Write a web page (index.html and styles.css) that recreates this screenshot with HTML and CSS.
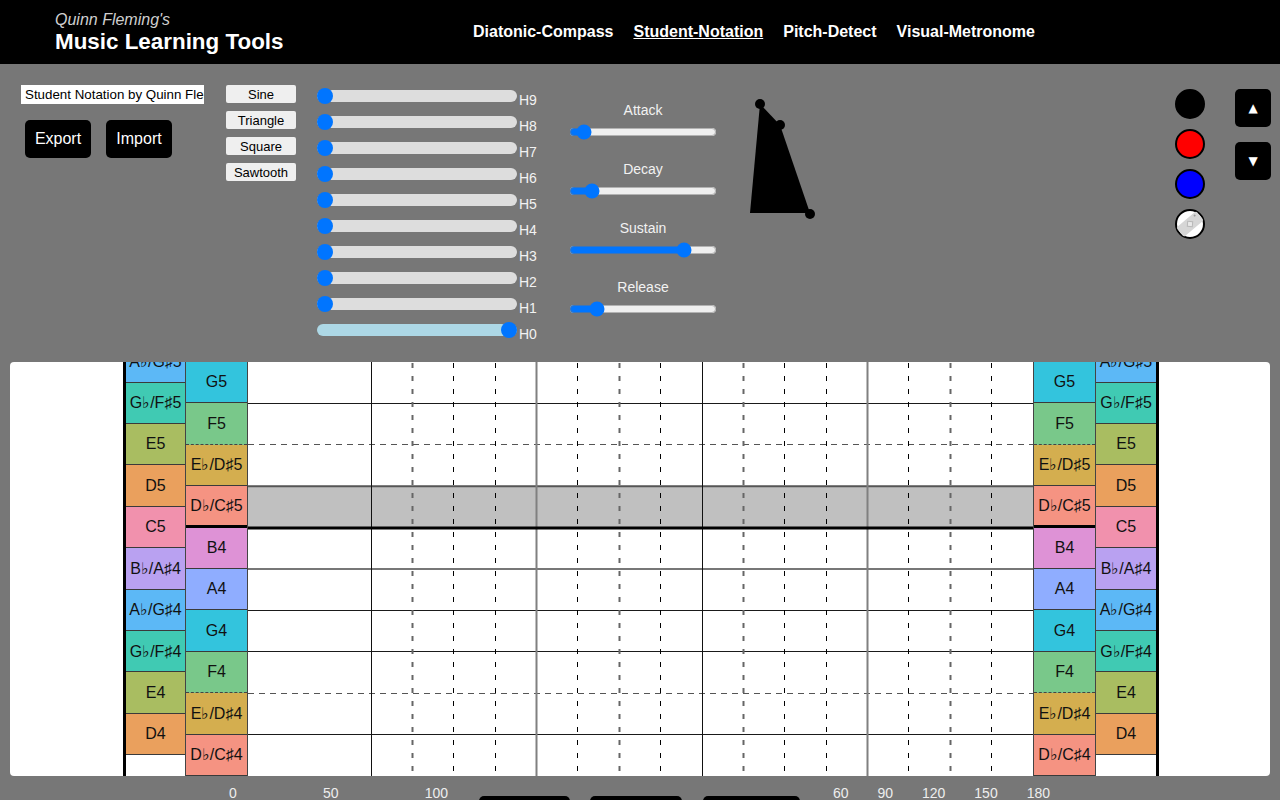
FILE: index.html
```html
<!DOCTYPE html>
<html>
<head>
<meta charset="utf-8">
<title>Student Notation</title>
<link rel="stylesheet" href="styles.css">
</head>
<body>
<header class="topbar">
  <div class="brand">
    <div class="brand-sub">Quinn Fleming's</div>
    <div class="brand-title">Music Learning Tools</div>
  </div>
  <nav class="nav">
    <a class="nav-link">Diatonic-Compass</a>
    <a class="nav-link active">Student-Notation</a>
    <a class="nav-link">Pitch-Detect</a>
    <a class="nav-link">Visual-Metronome</a>
  </nav>
</header>

<section class="controls">
  <div class="file-col">
    <input class="title-input" type="text" value="Student Notation by Quinn Fleming">
    <div class="file-buttons">
      <button class="dark-btn">Export</button>
      <button class="dark-btn">Import</button>
    </div>
  </div>

  <div class="wave-col">
    <button class="wave-btn">Sine</button>
    <button class="wave-btn">Triangle</button>
    <button class="wave-btn">Square</button>
    <button class="wave-btn">Sawtooth</button>
  </div>

  <div class="harm-col">
    <div class="harm-row"><input class="harm" type="range" min="0" max="100" value="0"><span class="harm-label">H9</span></div>
    <div class="harm-row"><input class="harm" type="range" min="0" max="100" value="0"><span class="harm-label">H8</span></div>
    <div class="harm-row"><input class="harm" type="range" min="0" max="100" value="0"><span class="harm-label">H7</span></div>
    <div class="harm-row"><input class="harm" type="range" min="0" max="100" value="0"><span class="harm-label">H6</span></div>
    <div class="harm-row"><input class="harm" type="range" min="0" max="100" value="0"><span class="harm-label">H5</span></div>
    <div class="harm-row"><input class="harm" type="range" min="0" max="100" value="0"><span class="harm-label">H4</span></div>
    <div class="harm-row"><input class="harm" type="range" min="0" max="100" value="0"><span class="harm-label">H3</span></div>
    <div class="harm-row"><input class="harm" type="range" min="0" max="100" value="0"><span class="harm-label">H2</span></div>
    <div class="harm-row"><input class="harm" type="range" min="0" max="100" value="0"><span class="harm-label">H1</span></div>
    <div class="harm-row"><input class="harm harm-base" type="range" min="0" max="100" value="100"><span class="harm-label">H0</span></div>
  </div>

  <div class="adsr-col">
    <div class="adsr-group"><div class="adsr-label">Attack</div><input class="adsr" type="range" min="0" max="100" value="5"></div>
    <div class="adsr-group"><div class="adsr-label">Decay</div><input class="adsr" type="range" min="0" max="100" value="11"></div>
    <div class="adsr-group"><div class="adsr-label">Sustain</div><input class="adsr" type="range" min="0" max="100" value="81"></div>
    <div class="adsr-group"><div class="adsr-label">Release</div><input class="adsr" type="range" min="0" max="100" value="15"></div>
  </div>

  <svg class="envelope" width="72" height="126" viewBox="0 0 72 126">
    <polygon points="5,118 15,9 35,30 65,118" fill="#000"/>
    <circle cx="15" cy="9" r="5" fill="#000"/>
    <circle cx="35" cy="30" r="5" fill="#000"/>
    <circle cx="65" cy="119" r="5" fill="#000"/>
  </svg>

  <div class="right-tools">
    <div class="swatches">
      <span class="swatch swatch-black"></span>
      <span class="swatch swatch-red"></span>
      <span class="swatch swatch-blue"></span>
      <svg class="eraser" width="30" height="30" viewBox="0 0 30 30">
        <circle cx="15" cy="15" r="14" fill="#fff" stroke="#000" stroke-width="2"/>
        <g transform="rotate(-40 15 15)">
          <rect x="2" y="9" width="26" height="12" rx="2" fill="#d6d6d6"/>
          <rect x="12.5" y="12.5" width="5" height="5" fill="#e8e8e8" stroke="#b8b8b8" stroke-width="1" transform="rotate(45 15 15)"/>
          <circle cx="24" cy="11.5" r="1" fill="#9a9a9a"/>
        </g>
      </svg>
    </div>
    <div class="arrows">
      <button class="arrow-btn">▲</button>
      <button class="arrow-btn">▼</button>
    </div>
  </div>
</section>

<main class="panel">
  <div class="ladder">
    <div class="col col-a col-a-left">
      <div class="cell n-ab">A♭/G♯5</div>
      <div class="cell n-gb">G♭/F♯5</div>
      <div class="cell n-e">E5</div>
      <div class="cell n-d">D5</div>
      <div class="cell n-c">C5</div>
      <div class="cell n-bb">B♭/A♯4</div>
      <div class="cell n-ab">A♭/G♯4</div>
      <div class="cell n-gb">G♭/F♯4</div>
      <div class="cell n-e">E4</div>
      <div class="cell n-d">D4</div>
      <div class="cell n-empty"></div>
    </div>
    <div class="col col-b">
      <div class="cell n-g">G5</div>
      <div class="cell n-f dashed">F5</div>
      <div class="cell n-eb">E♭/D♯5</div>
      <div class="cell n-db c-line">D♭/C♯5</div>
      <div class="cell n-b">B4</div>
      <div class="cell n-a">A4</div>
      <div class="cell n-g">G4</div>
      <div class="cell n-f dashed">F4</div>
      <div class="cell n-eb">E♭/D♯4</div>
      <div class="cell n-db">D♭/C♯4</div>
    </div>
  </div>

  <svg class="grid" width="785" height="414" viewBox="0 0 785 414">
    <rect x="0" y="124.2" width="785" height="41.4" fill="#c0c0c0"/>
    <g fill="none">
      <line x1="0" y1="41.5" x2="785" y2="41.5" stroke="#1a1a1a" stroke-width="1"/>
      <line x1="0" y1="82.5" x2="785" y2="82.5" stroke="#555" stroke-width="1" stroke-dasharray="6 5"/>
      <line x1="0" y1="124.2" x2="785" y2="124.2" stroke="#555" stroke-width="2"/>
      <line x1="0" y1="207" x2="785" y2="207" stroke="#777" stroke-width="2"/>
      <line x1="0" y1="248.5" x2="785" y2="248.5" stroke="#1a1a1a" stroke-width="1"/>
      <line x1="0" y1="289.5" x2="785" y2="289.5" stroke="#1a1a1a" stroke-width="1"/>
      <line x1="0" y1="331.5" x2="785" y2="331.5" stroke="#555" stroke-width="1" stroke-dasharray="6 5"/>
      <line x1="0" y1="372.5" x2="785" y2="372.5" stroke="#1a1a1a" stroke-width="1"/>
    </g>
    <g fill="none">
      <line x1="123.5" y1="0" x2="123.5" y2="414" stroke="#111" stroke-width="1"/>
      <line x1="164.5" y1="1" x2="164.5" y2="414" stroke="#666" stroke-width="2" stroke-dasharray="5 8"/>
      <line x1="205.5" y1="1" x2="205.5" y2="414" stroke="#000" stroke-width="1" stroke-dasharray="5 8"/>
      <line x1="247.5" y1="1" x2="247.5" y2="414" stroke="#000" stroke-width="1" stroke-dasharray="5 8"/>
      <line x1="288.5" y1="0" x2="288.5" y2="414" stroke="#808080" stroke-width="2"/>
      <line x1="329.5" y1="1" x2="329.5" y2="414" stroke="#000" stroke-width="1" stroke-dasharray="5 8"/>
      <line x1="371.5" y1="1" x2="371.5" y2="414" stroke="#666" stroke-width="2" stroke-dasharray="5 8"/>
      <line x1="412.5" y1="1" x2="412.5" y2="414" stroke="#000" stroke-width="1" stroke-dasharray="5 8"/>
      <line x1="454.5" y1="0" x2="454.5" y2="414" stroke="#111" stroke-width="1"/>
      <line x1="495.5" y1="1" x2="495.5" y2="414" stroke="#666" stroke-width="2" stroke-dasharray="5 8"/>
      <line x1="536.5" y1="1" x2="536.5" y2="414" stroke="#000" stroke-width="1" stroke-dasharray="5 8"/>
      <line x1="578.5" y1="1" x2="578.5" y2="414" stroke="#000" stroke-width="1" stroke-dasharray="5 8"/>
      <line x1="619.5" y1="0" x2="619.5" y2="414" stroke="#808080" stroke-width="2"/>
      <line x1="660.5" y1="1" x2="660.5" y2="414" stroke="#000" stroke-width="1" stroke-dasharray="5 8"/>
      <line x1="702.5" y1="1" x2="702.5" y2="414" stroke="#666" stroke-width="2" stroke-dasharray="5 8"/>
      <line x1="743.5" y1="1" x2="743.5" y2="414" stroke="#000" stroke-width="1" stroke-dasharray="5 8"/>
    </g>
    <line x1="0" y1="166" x2="785" y2="166" stroke="#000" stroke-width="3"/>
  </svg>

  <div class="ladder">
    <div class="col col-b">
      <div class="cell n-g">G5</div>
      <div class="cell n-f dashed">F5</div>
      <div class="cell n-eb">E♭/D♯5</div>
      <div class="cell n-db c-line">D♭/C♯5</div>
      <div class="cell n-b">B4</div>
      <div class="cell n-a">A4</div>
      <div class="cell n-g">G4</div>
      <div class="cell n-f dashed">F4</div>
      <div class="cell n-eb">E♭/D♯4</div>
      <div class="cell n-db">D♭/C♯4</div>
    </div>
    <div class="col col-a col-a-right">
      <div class="cell n-ab">A♭/G♯5</div>
      <div class="cell n-gb">G♭/F♯5</div>
      <div class="cell n-e">E5</div>
      <div class="cell n-d">D5</div>
      <div class="cell n-c">C5</div>
      <div class="cell n-bb">B♭/A♯4</div>
      <div class="cell n-ab">A♭/G♯4</div>
      <div class="cell n-gb">G♭/F♯4</div>
      <div class="cell n-e">E4</div>
      <div class="cell n-d">D4</div>
      <div class="cell n-empty"></div>
    </div>
  </div>
</main>

<div class="bottom-row">
  <div class="ticks ticks-a"><span>0</span><span>50</span><span>100</span></div>
  <div class="bottom-btn bottom-btn-1"></div>
  <div class="bottom-btn bottom-btn-2"></div>
  <div class="bottom-btn bottom-btn-3"></div>
  <div class="ticks ticks-b"><span>60</span><span>90</span><span>120</span><span>150</span><span>180</span></div>
</div>
</body>
</html>
```

FILE: styles.css
```css
html, body {
  margin: 0;
  padding: 0;
  height: 800px;
  overflow: hidden;
}

body {
  background: #777777;
  font-family: "Liberation Sans", Arial, sans-serif;
  color: #fff;
}

/* Header */
.topbar {
  height: 64px;
  background: #000;
  display: flex;
  align-items: center;
}

.brand {
  width: 473px;
  padding-left: 55px;
  box-sizing: border-box;
}

.brand-sub {
  font-style: italic;
  font-size: 16px;
  line-height: 18px;
  color: #cfcfcf;
}

.brand-title {
  font-weight: bold;
  font-size: 22.4px;
  line-height: 25px;
  color: #fff;
}

.nav {
  display: flex;
  gap: 20px;
}

.nav-link {
  font-weight: bold;
  font-size: 16px;
  line-height: 18px;
  color: #fff;
  text-decoration: none;
}

.nav-link.active {
  text-decoration: underline;
}

/* Controls */
.controls {
  height: 298px;
  display: flex;
  align-items: flex-start;
}

.file-col {
  margin-left: 21px;
  margin-top: 21px;
  width: 183px;
}

.title-input {
  display: block;
  width: 183px;
  height: 19px;
  box-sizing: border-box;
  border: 0;
  padding: 0 0 0 4px;
  margin: 0;
  font-family: "Liberation Sans", Arial, sans-serif;
  font-size: 13.33px;
  color: #000;
  background: #fff;
  outline: none;
}

.file-buttons {
  display: flex;
  gap: 15px;
  margin-top: 16px;
  padding-left: 4px;
}

.dark-btn {
  width: 66px;
  height: 38px;
  border: 0;
  border-radius: 5px;
  background: #000;
  color: #fff;
  font-family: "Liberation Sans", Arial, sans-serif;
  font-size: 16px;
  padding: 0;
}

.wave-col {
  margin-left: 22px;
  margin-top: 21px;
  display: flex;
  flex-direction: column;
  gap: 8px;
}

.wave-btn {
  width: 70px;
  height: 18px;
  border: 0;
  border-radius: 2px;
  background: #efefef;
  color: #000;
  font-family: "Liberation Sans", Arial, sans-serif;
  font-size: 13px;
  padding: 0;
}

.harm-col {
  margin-left: 21px;
  margin-top: 19px;
  width: 230px;
}

.harm-row {
  height: 26px;
  display: flex;
  align-items: center;
}

.harm {
  -webkit-appearance: none;
  appearance: none;
  width: 200px;
  height: 12px;
  margin: 0;
  background: #dddddd;
  border-radius: 6px;
  outline: none;
}

.harm::-webkit-slider-thumb {
  -webkit-appearance: none;
  appearance: none;
  width: 16px;
  height: 16px;
  border-radius: 50%;
  background: #0075ff;
  border: 0;
}

.harm-base {
  background: #add8e6;
}

.harm-label {
  margin-left: 2px;
  padding-top: 8px;
  font-size: 14px;
  line-height: 16px;
  color: #f2f2f2;
}

.adsr-col {
  margin-left: 22px;
  margin-top: 38px;
  width: 148px;
}

.adsr-group {
  height: 59px;
}

.adsr-label {
  text-align: center;
  font-size: 14px;
  line-height: 16px;
  color: #f2f2f2;
}

.adsr {
  display: block;
  width: 148px;
  height: 16px;
  margin: 6px 0 0 0;
}

.envelope {
  margin-left: 28px;
  margin-top: 31px;
}

.right-tools {
  margin-left: auto;
  margin-right: 9px;
  margin-top: 25px;
  display: flex;
  gap: 30px;
}

.swatches {
  display: flex;
  flex-direction: column;
  gap: 10px;
}

.swatch {
  display: block;
  width: 30px;
  height: 30px;
  box-sizing: border-box;
  border: 2px solid #000;
  border-radius: 50%;
}

.swatch-black { background: #000; }
.swatch-red { background: #ff0000; }
.swatch-blue { background: #0000ff; }

.eraser {
  display: block;
}

.arrows {
  display: flex;
  flex-direction: column;
  gap: 15px;
}

.arrow-btn {
  width: 36px;
  height: 38px;
  border: 0;
  border-radius: 5px;
  background: #000;
  color: #fff;
  font-size: 12px;
  padding: 0;
  font-family: "DejaVu Sans", sans-serif;
}

/* Notation panel */
.panel {
  margin: 0 10px;
  height: 414px;
  background: #fff;
  border-radius: 4px;
  overflow: hidden;
  display: flex;
  align-items: flex-start;
  padding-left: 113px;
}

.ladder {
  display: flex;
  align-items: flex-start;
}

.col {
  display: flex;
  flex-direction: column;
}

.col-a {
  width: 63px;
  margin-top: -20.7px;
  box-sizing: border-box;
}

.col-a-left {
  border-left: 3px solid #000;
  width: 62px;
}

.col-a-right {
  border-right: 3px solid #000;
  width: 63px;
}

.col-b {
  width: 63px;
  box-sizing: border-box;
  border-left: 1px solid #444;
  border-right: 1px solid #444;
}

.cell {
  height: 41.4px;
  box-sizing: border-box;
  border-bottom: 1px solid #3a3a3a;
  display: flex;
  align-items: center;
  justify-content: center;
  font-size: 16px;
  color: #111;
  white-space: nowrap;
}

.cell.dashed {
  border-bottom: 1px dashed #444;
}

.cell.c-line {
  border-bottom: 3px solid #000;
}

.n-ab { background: #5cb8f6; }
.n-gb { background: #40cab3; }
.n-e { background: #a9bd61; }
.n-d { background: #eaa05d; }
.n-c { background: #f191ad; }
.n-bb { background: #b9a1f1; }
.n-g { background: #33c4dd; }
.n-f { background: #79c88a; }
.n-eb { background: #d4ae4f; }
.n-db { background: #f59382; }
.n-b { background: #de92d6; }
.n-a { background: #8fadff; }
.n-empty { background: #fff; border-bottom: 0; }

.grid {
  display: block;
  flex: none;
}

/* Bottom row */
.bottom-row {
  display: flex;
  align-items: flex-start;
  padding-left: 229px;
  margin-top: 9px;
}

.ticks {
  display: flex;
  justify-content: space-between;
  font-size: 14px;
  line-height: 16px;
  color: #eeeeee;
}

.ticks-a { width: 219px; }
.ticks-b { width: 217px; margin-left: 33px; }

.bottom-btn {
  height: 30px;
  margin-top: 11px;
  background: #000;
  border-radius: 5px;
}

.bottom-btn-1 { width: 91px; margin-left: 31px; }
.bottom-btn-2 { width: 92px; margin-left: 20px; }
.bottom-btn-3 { width: 97px; margin-left: 21px; }
```
